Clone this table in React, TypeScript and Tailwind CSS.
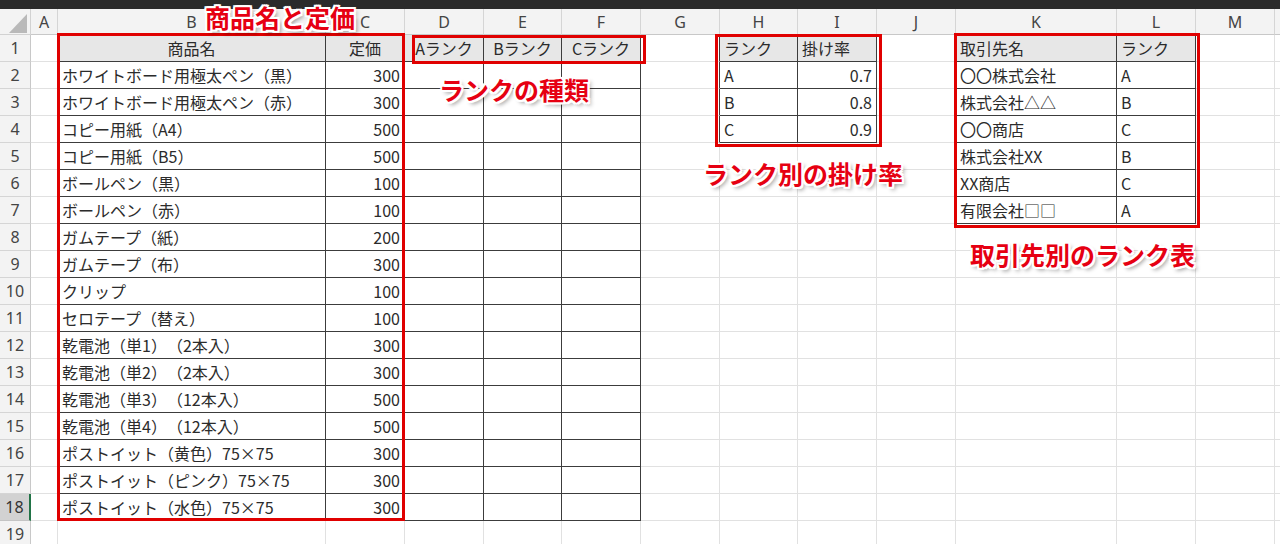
import React from "react";

type Align = "l" | "c" | "r";
type Cell = { t: string; a: Align };

const data: Record<string, Cell> = {};
const set = (r: number, c: number, t: string, a: Align = "l") => {
  data[`${r}-${c}`] = { t, a };
};

// B/C table
set(1, 2, "商品名", "c");
set(1, 3, "定価", "c");
const items: [string, string][] = [
  ["ホワイトボード用極太ペン（黒）", "300"],
  ["ホワイトボード用極太ペン（赤）", "300"],
  ["コピー用紙（A4）", "500"],
  ["コピー用紙（B5）", "500"],
  ["ボールペン（黒）", "100"],
  ["ボールペン（赤）", "100"],
  ["ガムテープ（紙）", "200"],
  ["ガムテープ（布）", "300"],
  ["クリップ", "100"],
  ["セロテープ（替え）", "100"],
  ["乾電池（単1）（2本入）", "300"],
  ["乾電池（単2）（2本入）", "300"],
  ["乾電池（単3）（12本入）", "500"],
  ["乾電池（単4）（12本入）", "500"],
  ["ポストイット（黄色）75×75", "300"],
  ["ポストイット（ピンク）75×75", "300"],
  ["ポストイット（水色）75×75", "300"],
];
items.forEach(([n, p], i) => {
  set(i + 2, 2, n);
  set(i + 2, 3, p, "r");
});
set(1, 4, "Aランク", "c");
set(1, 5, "Bランク", "c");
set(1, 6, "Cランク", "c");
set(1, 8, "ランク");
set(1, 9, "掛け率");
[["A", "0.7"], ["B", "0.8"], ["C", "0.9"]].forEach(([k, v], i) => {
  set(i + 2, 8, k);
  set(i + 2, 9, v, "r");
});
set(1, 11, "取引先名");
set(1, 12, "ランク");
[
  ["〇〇株式会社", "A"],
  ["株式会社△△", "B"],
  ["〇〇商店", "C"],
  ["株式会社XX", "B"],
  ["XX商店", "C"],
  ["有限会社□□", "A"],
].forEach(([k, v], i) => {
  set(i + 2, 11, k);
  set(i + 2, 12, v);
});

const tables = [
  { c1: 2, c2: 3, r1: 1, r2: 18 },
  { c1: 4, c2: 6, r1: 1, r2: 18 },
  { c1: 8, c2: 9, r1: 1, r2: 4 },
  { c1: 11, c2: 12, r1: 1, r2: 7 },
];
const inTable = (r: number, c: number) =>
  tables.some((t) => r >= t.r1 && r <= t.r2 && c >= t.c1 && c <= t.c2);
const filled = (r: number, c: number) => r === 1 && [2, 3, 4, 5, 6, 8, 9, 11, 12].includes(c);

const letters = ["", "A", "B", "C", "D", "E", "F", "G", "H", "I", "J", "K", "L", "M", ""];

const annot =
  "absolute text-[25px] leading-[25px] font-bold text-[#e60012] whitespace-nowrap [font-family:'Noto_Sans_CJK_JP',sans-serif] [text-shadow:2px_0_0_#fff,-2px_0_0_#fff,0_2px_0_#fff,0_-2px_0_#fff,2px_2px_0_#fff,-2px_-2px_0_#fff,2px_-2px_0_#fff,-2px_2px_0_#fff,3px_3px_4px_rgba(0,0,0,0.45)]";

export default function App() {
  const rows = Array.from({ length: 19 }, (_, i) => i + 1);
  const cols = Array.from({ length: 14 }, (_, i) => i + 1);
  return (
    <div className="relative w-[1280px] h-[544px] overflow-hidden bg-white [font-family:'Noto_Sans_CJK_JP',sans-serif] [text-spacing-trim:space-all]">
      <div className="h-[9px] bg-[#2b2b2b]" />
      <div className="grid grid-cols-[31px_27px_268px_79px_79px_78px_79px_79px_78px_79px_79px_161px_79px_79px_1fr] grid-rows-[26px_repeat(19,27px)]">
        {/* header row */}
        <div className="relative bg-[#f3f3f3] border-r border-b border-[#d2d2d2]">
          <svg className="absolute left-[9px] top-[5px]" width="18" height="19" viewBox="0 0 18 19">
            <polygon points="18,0 18,19 0,19" fill="#b9b9b9" />
          </svg>
        </div>
        {cols.map((c) => (
          <div
            key={`h-${c}`}
            className="flex items-center justify-center bg-[#f3f3f3] border-r border-b border-r-[#d5d5d5] border-b-[#c8c8c8] text-[16px] text-[#444] [font-family:'Noto_Sans',sans-serif]"
          >
            {letters[c]}
          </div>
        ))}
        {rows.map((r) => (
          <React.Fragment key={`r-${r}`}>
            <div
              className={
                r === 18
                  ? "flex items-center justify-center bg-[#d2d2d2] border-b border-r-2 border-b-[#c4c4c4] border-r-[#217346] text-[16px] text-[#333] [font-family:'Noto_Sans',sans-serif]"
                  : "flex items-center justify-center bg-[#f3f3f3] border-b border-r border-b-[#d5d5d5] border-r-[#c8c8c8] text-[16px] text-[#444] [font-family:'Noto_Sans',sans-serif]"
              }
            >
              {r}
            </div>
            {cols.map((c) => {
              const d = data[`${r}-${c}`];
              const rDark = inTable(r, c) || inTable(r, c + 1);
              const bDark = inTable(r, c) || inTable(r + 1, c);
              const cls = [
                "flex items-center overflow-hidden whitespace-nowrap border-r border-b text-[16px] text-[#2b2b2b] px-[4px]",
                rDark ? "border-r-[#3c3c3c]" : "border-r-[#e1e1e1]",
                bDark ? "border-b-[#3c3c3c]" : "border-b-[#e1e1e1]",
                filled(r, c) ? "bg-[#e7e7e7]" : "bg-white",
                d?.a === "c" ? "justify-center" : d?.a === "r" ? "justify-end" : "justify-start",
              ].join(" ");
              return (
                <div key={`${r}-${c}`} className={cls}>
                  {d?.t ?? ""}
                </div>
              );
            })}
          </React.Fragment>
        ))}
      </div>

      {/* red highlight boxes */}
      <div className="absolute left-[57px] top-[33px] w-[348px] h-[488px] border-[3px] border-[#e00000]" />
      <div className="absolute left-[412px] top-[35px] w-[234px] h-[29px] border-[3px] border-[#e00000]" />
      <div className="absolute left-[715px] top-[34px] w-[167px] h-[113px] border-[3px] border-[#e00000]" />
      <div className="absolute left-[954px] top-[33px] w-[246px] h-[195px] border-[3px] border-[#e00000]" />

      {/* annotations */}
      <div className={`${annot} left-[205px] top-[5px]`}>商品名と定価</div>
      <div className={`${annot} left-[439px] top-[77px]`}>ランクの種類</div>
      <div className={`${annot} left-[703px] top-[161px]`}>ランク別の掛け率</div>
      <div className={`${annot} left-[970px] top-[242px]`}>取引先別のランク表</div>
    </div>
  );
}
